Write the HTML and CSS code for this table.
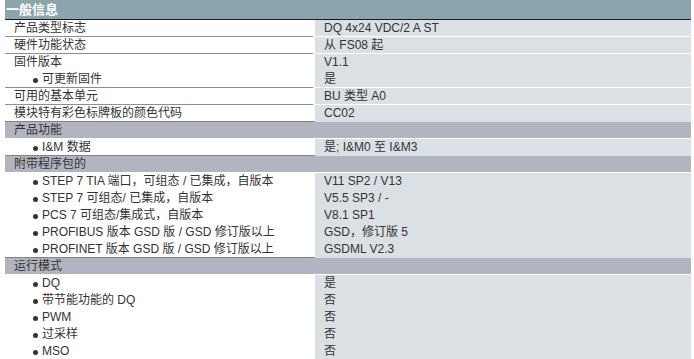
FILE: index.html
```html
<!DOCTYPE html>
<html lang="zh-CN">
<head>
  <meta charset="UTF-8" />
  <title>一般信息</title>
  <link rel="stylesheet" href="styles.css">
</head>
<body>
  <div class="spec">
    <div class="spec-head">一般信息</div>

    <div class="row line">
      <div class="lbl">产品类型标志</div>
      <div class="val">DQ 4x24 VDC/2 A ST</div>
    </div>
    <div class="row line">
      <div class="lbl">硬件功能状态</div>
      <div class="val">从 FS08 起</div>
    </div>
    <div class="row line">
      <div class="lbl">固件版本<br><span class="sub">可更新固件</span></div>
      <div class="val">V1.1<br>是</div>
    </div>
    <div class="row line">
      <div class="lbl">可用的基本单元</div>
      <div class="val">BU 类型 A0</div>
    </div>
    <div class="row">
      <div class="lbl">模块特有彩色标牌板的颜色代码</div>
      <div class="val">CC02</div>
    </div>

    <div class="section">产品功能</div>
    <div class="row">
      <div class="lbl"><span class="sub">I&amp;M 数据</span></div>
      <div class="val">是; I&amp;M0 至 I&amp;M3</div>
    </div>

    <div class="section">附带程序包的</div>
    <div class="row">
      <div class="lbl">
        <span class="sub">STEP 7 TIA 端口，可组态 / 已集成，自版本</span><br>
        <span class="sub">STEP 7 可组态/ 已集成，自版本</span><br>
        <span class="sub">PCS 7 可组态/集成式，自版本</span><br>
        <span class="sub">PROFIBUS 版本 GSD 版 / GSD 修订版以上</span><br>
        <span class="sub">PROFINET 版本 GSD 版 / GSD 修订版以上</span>
      </div>
      <div class="val">V11 SP2 / V13<br>V5.5 SP3 / -<br>V8.1 SP1<br>GSD，修订版 5<br>GSDML V2.3</div>
    </div>

    <div class="section">运行模式</div>
    <div class="row">
      <div class="lbl">
        <span class="sub">DQ</span><br>
        <span class="sub">带节能功能的 DQ</span><br>
        <span class="sub">PWM</span><br>
        <span class="sub">过采样</span><br>
        <span class="sub">MSO</span>
      </div>
      <div class="val">是<br>否<br>否<br>否<br>否</div>
    </div>
  </div>
</body>
</html>
```

FILE: styles.css
```css
/* spec sheet table, light theme */
body {
  margin: 0;
  padding: 0 3px 0 5px;
  background: #fff;
  color: #333;
  font-family: "Liberation Sans", Arial, "Noto Sans CJK SC", sans-serif;
  font-size: 12px;
}
.spec {
  width: 686px;
}
.spec-head {
  height: 19px;
  line-height: 19px;
  padding-left: 1px;
  background: #8ca4ae;
  border-bottom: 1px solid #1c1c1c;
  color: #fff;
  font-size: 13px;
  font-weight: bold;
}
.row {
  display: grid;
  grid-template-columns: 308px 1fr;
  column-gap: 2px;
  line-height: 17px;
}
.lbl {
  padding-left: 9px;
  white-space: nowrap;
}
.val {
  padding-left: 9px;
  background: #dbe0e4;
  white-space: nowrap;
}
/* separator under a group of items */
.row.line .lbl {
  box-shadow: inset 0 -1px #8e8e8e;
}
.row.line .val {
  box-shadow: inset 0 -1px #fff;
}
.sub {
  position: relative;
  padding-left: 28px;
}
.sub::before {
  content: "";
  position: absolute;
  left: 19px;
  top: 6px;
  width: 5px;
  height: 5px;
  border-radius: 50%;
  background: #333;
}
.section {
  height: 16px;
  line-height: 16px;
  margin-top: -1px;
  padding-left: 9px;
  background: #b1b5bf;
  border-top: 1px solid #7f8389;
  border-bottom: 1px solid #fff;
}
```
